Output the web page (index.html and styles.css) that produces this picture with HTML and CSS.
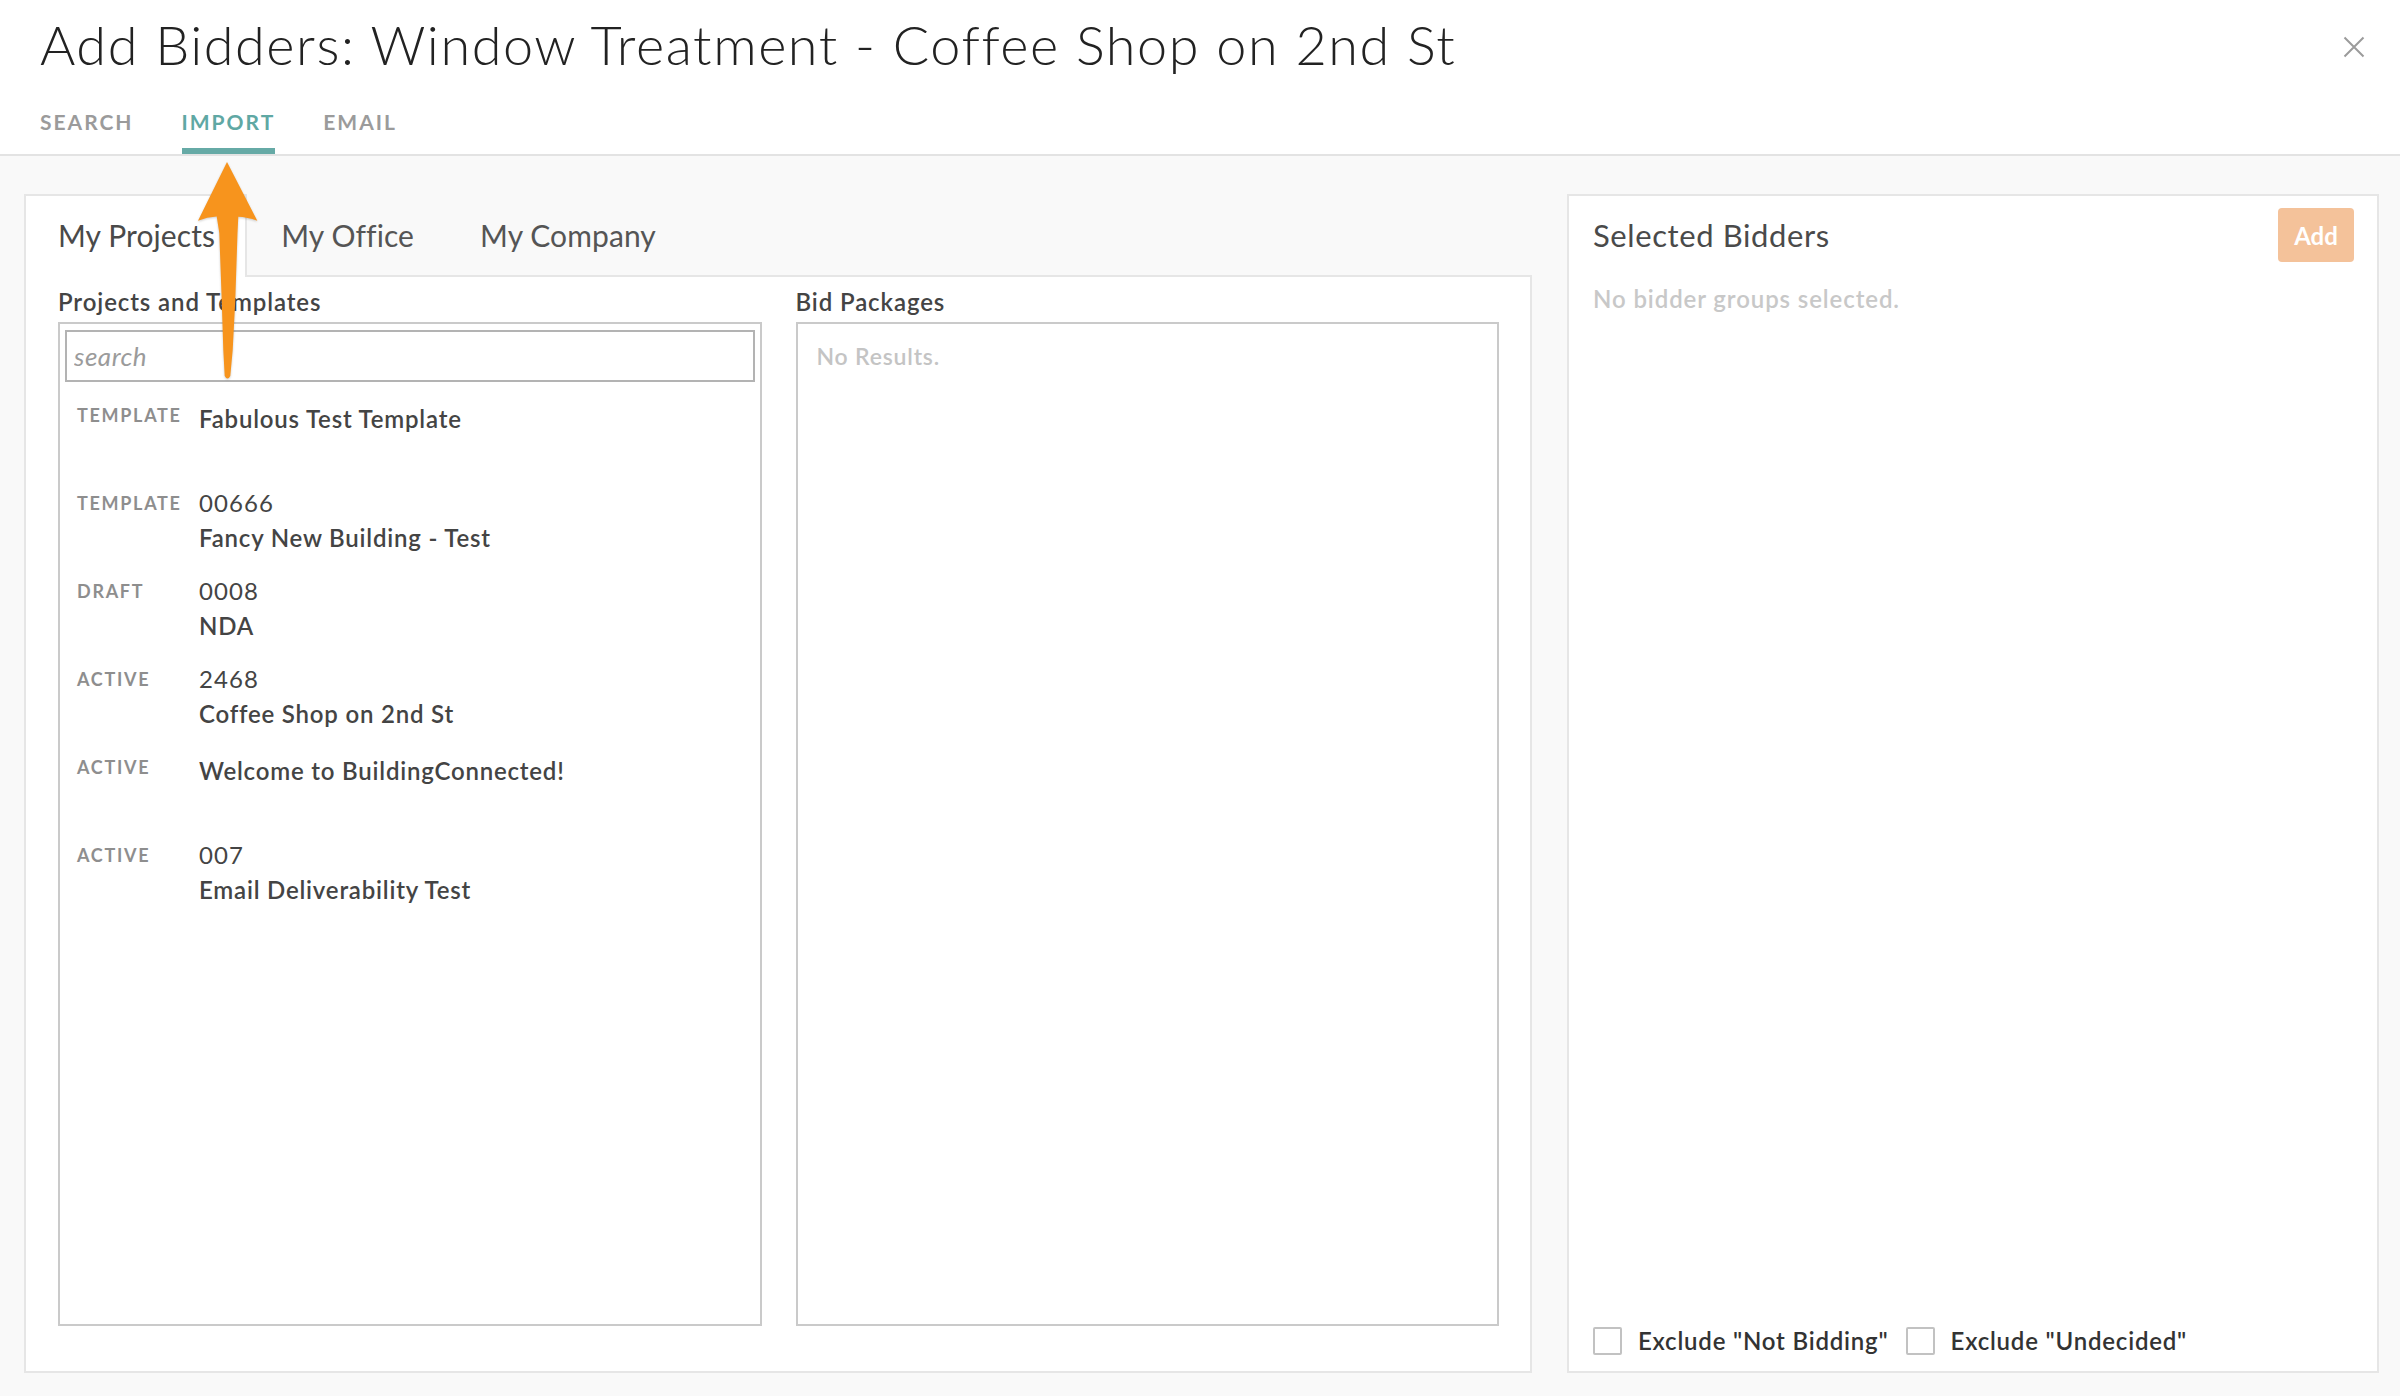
FILE: index.html
```html
<!DOCTYPE html>
<html lang="en">
<head>
<meta charset="utf-8">
<title>Add Bidders</title>
<link rel="stylesheet" href="styles.css">
</head>
<body>
<div class="modal">
  <header class="modal-header">
    <h1 class="modal-title">Add Bidders: Window Treatment - Coffee Shop on 2nd St</h1>
    <button class="close-btn" type="button" aria-label="Close">
      <svg width="22" height="22" viewBox="0 0 22 22"><path d="M1.5 1.5 L20.5 20.5 M20.5 1.5 L1.5 20.5" stroke="#9b9b9b" stroke-width="2" fill="none"/></svg>
    </button>
    <nav class="mode-tabs">
      <a class="mode-tab">SEARCH</a>
      <a class="mode-tab active">IMPORT</a>
      <a class="mode-tab">EMAIL</a>
    </nav>
  </header>

  <main class="modal-body">
    <section class="import-panel">
      <div class="source-tabs">
        <div class="source-tab active">My Projects</div>
        <div class="source-tab">My Office</div>
        <div class="source-tab">My Company</div>
      </div>
      <div class="import-content">
        <div class="column">
          <h3 class="column-title">Projects and Templates</h3>
          <div class="listbox">
            <input class="search-input" type="text" placeholder="search">
            <ul class="project-list">
              <li class="project-row">
                <span class="status">TEMPLATE</span>
                <div class="project-info"><div class="project-name">Fabulous Test Template</div></div>
              </li>
              <li class="project-row">
                <span class="status">TEMPLATE</span>
                <div class="project-info"><div class="project-number">00666</div><div class="project-name">Fancy New Building - Test</div></div>
              </li>
              <li class="project-row">
                <span class="status">DRAFT</span>
                <div class="project-info"><div class="project-number">0008</div><div class="project-name">NDA</div></div>
              </li>
              <li class="project-row">
                <span class="status">ACTIVE</span>
                <div class="project-info"><div class="project-number">2468</div><div class="project-name">Coffee Shop on 2nd St</div></div>
              </li>
              <li class="project-row">
                <span class="status">ACTIVE</span>
                <div class="project-info"><div class="project-name">Welcome to BuildingConnected!</div></div>
              </li>
              <li class="project-row">
                <span class="status">ACTIVE</span>
                <div class="project-info"><div class="project-number">007</div><div class="project-name">Email Deliverability Test</div></div>
              </li>
            </ul>
          </div>
        </div>
        <div class="column">
          <h3 class="column-title">Bid Packages</h3>
          <div class="listbox listbox-empty">
            <p class="empty-text">No Results.</p>
          </div>
        </div>
      </div>
    </section>

    <aside class="selected-panel">
      <div class="selected-header">
        <h2 class="selected-title">Selected Bidders</h2>
        <button class="add-btn" type="button">Add</button>
      </div>
      <p class="selected-empty">No bidder groups selected.</p>
      <div class="exclude-row">
        <label class="exclude-option"><span class="checkbox"></span>Exclude "Not Bidding"</label>
        <label class="exclude-option"><span class="checkbox"></span>Exclude "Undecided"</label>
      </div>
    </aside>
  </main>

  <svg class="annotation-arrow" width="80" height="235" viewBox="0 0 80 235">
    <path d="M37 7 L67.3 65.7 Q57 62 48.3 61.7 L47.5 78 L45.3 145 L42.7 195 L40.3 221 Q37.5 226 34.7 221 L33.3 195 L31.7 145 L29.3 78 L26.7 61.5 Q17 62 8 65.7 Z" fill="#f7941d"/>
  </svg>
</div>
</body>
</html>
```

FILE: styles.css
```css
* { box-sizing: border-box; }

html, body {
  margin: 0;
  padding: 0;
  width: 2400px;
  height: 1396px;
  overflow: hidden;
  font-family: Lato, "Open Sans", "Liberation Sans", sans-serif;
  color: #444;
  background: #fff;
}

.modal {
  position: relative;
  width: 2400px;
  height: 1396px;
  display: flex;
  flex-direction: column;
}

/* Header */
.modal-header {
  position: relative;
  padding: 18px 40px 0;
  border-bottom: 2px solid #e3e3e3;
  background: #fff;
}

.modal-title {
  margin: 0;
  font-size: 54px;
  line-height: 54px;
  font-weight: 300;
  color: #222;
  letter-spacing: 1.55px;
}

.close-btn {
  position: absolute;
  top: 36px;
  right: 35px;
  width: 22px;
  height: 22px;
  padding: 0;
  border: 0;
  background: none;
  display: flex;
}

.mode-tabs {
  display: flex;
  gap: 48px;
  margin-top: 39px;
}

.mode-tab {
  display: block;
  font-size: 21px;
  line-height: 21px;
  font-weight: 700;
  letter-spacing: 2px;
  color: #9b9b9b;
  padding-bottom: 16px;
  border-bottom: 6px solid transparent;
}

.mode-tab.active {
  color: #5fa8a4;
  border-bottom-color: #66aaa6;
}

/* Body */
.modal-body {
  flex: 1;
  display: flex;
  gap: 35px;
  padding: 38px 21px 23px 24px;
  background: #f9f9f9;
}

.import-panel {
  width: 1508px;
  display: flex;
  flex-direction: column;
}

.source-tabs {
  display: flex;
  height: 81px;
}

.source-tab {
  padding: 24px 30px 0 32px;
  font-size: 30px;
  line-height: 30px;
  font-weight: 400;
  color: #555;
  border: 2px solid transparent;
  border-bottom: 0;
  letter-spacing: 0.1px;
}

.source-tab.active {
  background: #fff;
  border-color: #e6e6e6;
  height: 83px;
  position: relative;
  z-index: 1;
  color: #4a4a4a;
}

.import-content {
  flex: 1;
  display: grid;
  grid-template-columns: 1fr 1fr;
  column-gap: 34px;
  padding: 10px 31px 45px 32px;
  background: #fff;
  border: 2px solid #e6e6e6;
}

.column {
  display: flex;
  flex-direction: column;
  min-height: 0;
}

.column-title {
  margin: 0 0 5px;
  font-size: 24px;
  line-height: 30px;
  font-weight: 600;
  letter-spacing: 0.9px;
  color: #444;
}

.listbox {
  flex: 1;
  border: 2px solid #cacaca;
  padding: 6px 5px;
  background: #fff;
}

.search-input {
  display: block;
  width: 100%;
  height: 52px;
  border: 2px solid #b3b3b3;
  padding: 0 7px;
  font-family: inherit;
  font-size: 26px;
  color: #444;
  outline: none;
  background: #fff;
  letter-spacing: 0.5px;
}

.search-input::placeholder {
  color: #9b9b9b;
  font-style: italic;
}

.project-list {
  list-style: none;
  margin: 0;
  padding: 0;
}

.project-row {
  display: flex;
  height: 88px;
  padding: 16px 0 0 12px;
}

.status {
  width: 122px;
  flex: none;
  font-size: 18px;
  line-height: 34px;
  font-weight: 700;
  letter-spacing: 1.7px;
  color: #8e8e8e;
}

.project-number {
  font-size: 24px;
  line-height: 33px;
  font-weight: 400;
  letter-spacing: 1.1px;
  color: #444;
}

.project-name {
  font-size: 24px;
  line-height: 38px;
  font-weight: 600;
  letter-spacing: 0.8px;
  color: #444;
}

.project-info > .project-name:only-child {
  line-height: 41px;
}

.empty-text {
  margin: 11px 0 0 14px;
  font-size: 23px;
  line-height: 30px;
  letter-spacing: 0.8px;
  color: #c4c4c4;
  font-weight: 600;
}

/* Selected panel */
.selected-panel {
  width: 812px;
  display: flex;
  flex-direction: column;
  background: #fff;
  border: 2px solid #e6e6e6;
  padding: 12px 23px 15px 24px;
}

.selected-header {
  display: flex;
  justify-content: space-between;
  align-items: center;
  height: 54px;
}

.selected-title {
  margin: 0;
  font-size: 31px;
  line-height: 54px;
  font-weight: 400;
  letter-spacing: 0.6px;
  color: #4a4a4a;
}

.add-btn {
  width: 76px;
  height: 54px;
  border: 0;
  border-radius: 4px;
  background: #f4c29a;
  color: #fff;
  font-family: inherit;
  font-size: 24px;
  font-weight: 700;
  padding: 0;
}

.selected-empty {
  margin: 22px 0 0;
  font-size: 24px;
  line-height: 30px;
  font-weight: 600;
  letter-spacing: 0.9px;
  color: #c8c8c8;
  flex: 1;
}

.exclude-row {
  display: flex;
  align-items: center;
  gap: 17px;
}

.exclude-option {
  display: flex;
  align-items: center;
  gap: 16px;
  font-size: 24px;
  line-height: 30px;
  font-weight: 600;
  letter-spacing: 0.8px;
  color: #333;
}

.checkbox {
  width: 29px;
  height: 28px;
  border: 2px solid #c2c2c2;
  border-radius: 2px;
  background: #fff;
}

/* Annotation overlay */
.annotation-arrow {
  position: absolute;
  left: 190px;
  top: 155px;
  z-index: 5;
  filter: drop-shadow(0 1px 1px rgba(0, 0, 0, 0.2));
}
```
